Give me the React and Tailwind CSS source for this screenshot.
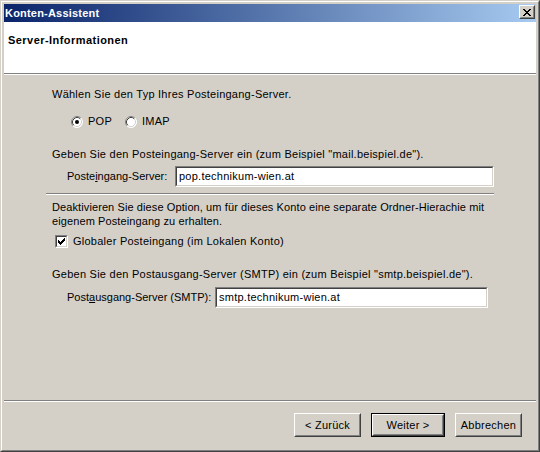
import React from "react";

function CloseButton() {
  return (
    <div className="mt-[1px] mr-[1px] w-[16px] h-[14px] border border-t-white border-l-white border-r-[#404040] border-b-[#404040] bg-[#d4d0c8]">
      <div className="w-full h-full border border-t-[#d4d0c8] border-l-[#d4d0c8] border-r-[#808080] border-b-[#808080] flex items-center justify-center">
        <svg width="8" height="7" viewBox="0 0 8 7" shapeRendering="crispEdges">
          <path d="M0 0h2v1h-2zM1 1h2v1h-2zM2 2h4v1h-4zM3 3h2v1h-2zM2 4h4v1h-4zM1 5h2v1h-2zM0 6h2v1h-2zM6 0h2v1h-2zM5 1h2v1h-2zM5 5h2v1h-2zM6 6h2v1h-2z" fill="#000" />
        </svg>
      </div>
    </div>
  );
}

function Radio({ checked }) {
  return (
    <svg width="12" height="12" viewBox="0 0 12 12" className="shrink-0">
      <circle cx="6" cy="6" r="5.5" fill="#fff" />
      <path d="M2.11 9.89A5.5 5.5 0 0 1 9.89 2.11" stroke="#808080" fill="none" />
      <path d="M9.89 2.11A5.5 5.5 0 0 1 2.11 9.89" stroke="#fff" fill="none" />
      <path d="M2.82 9.18A4.5 4.5 0 0 1 9.18 2.82" stroke="#404040" fill="none" />
      <path d="M9.18 2.82A4.5 4.5 0 0 1 2.82 9.18" stroke="#d4d0c8" fill="none" />
      {checked ? <circle cx="6" cy="6" r="2" fill="#000" /> : null}
    </svg>
  );
}

function Checkbox() {
  return (
    <div className="w-[13px] h-[13px] shrink-0 border border-t-[#808080] border-l-[#808080] border-r-white border-b-white">
      <div className="w-full h-full border border-t-[#404040] border-l-[#404040] border-r-[#d4d0c8] border-b-[#d4d0c8] bg-white flex items-center justify-center">
        <svg width="7" height="7" viewBox="0 0 7 7" shapeRendering="crispEdges">
          <path d="M0 2h1v3h-1zM1 3h1v3h-1zM2 4h1v3h-1zM3 3h1v3h-1zM4 2h1v3h-1zM5 1h1v3h-1zM6 0h1v3h-1z" fill="#000" />
        </svg>
      </div>
    </div>
  );
}

function Field({ value, className }) {
  return (
    <div className={"h-[21px] border border-t-[#808080] border-l-[#808080] border-r-white border-b-white " + className}>
      <div className="h-full border border-t-[#404040] border-l-[#404040] border-r-[#d4d0c8] border-b-[#d4d0c8] bg-white flex items-center pl-[2px]">
        {value}
      </div>
    </div>
  );
}

function Button({ label, width, isDefault }) {
  const inner = (
    <div className="h-full border border-t-white border-l-white border-r-[#404040] border-b-[#404040]">
      <div className="h-full border border-t-[#d4d0c8] border-l-[#d4d0c8] border-r-[#808080] border-b-[#808080] flex items-center justify-center">
        {label}
      </div>
    </div>
  );

  if (isDefault) {
    return (
      <div className={"h-[24px] border border-black " + width}>
        {inner}
      </div>
    );
  }

  return <div className={"h-[24px] " + width}>{inner}</div>;
}

export default function App() {
  return (
    <div className="w-[540px] h-[452px] whitespace-nowrap font-['Liberation_Sans',Arial,sans-serif] text-[11px] leading-[13px] tracking-[0.25px] text-black bg-[#d4d0c8] border border-t-[#d4d0c8] border-l-[#d4d0c8] border-r-[#404040] border-b-[#404040]">
      <div className="h-full border border-t-white border-l-white border-r-[#808080] border-b-[#808080] p-[2px] flex flex-col">
        <div className="h-[18px] shrink-0 flex items-start justify-between bg-[linear-gradient(to_right,#0a246a,#a6caf0)]">
          <span className="pl-[1px] leading-[18px] tracking-[0.2px] font-bold text-white">
            Konten-Assistent
          </span>
          <CloseButton />
        </div>

        <div className="h-[51px] shrink-0 bg-white pl-[4px] pt-[12px] font-bold tracking-[0.45px]">
          Server-Informationen
        </div>
        <div className="h-px shrink-0 bg-[#808080]" />
        <div className="h-px shrink-0 bg-white" />

        <div className="flex-1 ml-[42px] w-[448px] flex flex-col">
          <div className="mt-[13px] pl-[6px]">Wählen Sie den Typ Ihres Posteingang-Server.</div>

          <div className="mt-[14px] ml-[25px] h-[13px] flex items-center">
            <div className="w-[54px] flex items-center gap-[5px]">
              <Radio checked />
              <span>POP</span>
            </div>
            <div className="flex items-center gap-[5px]">
              <Radio />
              <span>IMAP</span>
            </div>
          </div>

          <div className="mt-[20px] pl-[6px]">
            Geben Sie den Posteingang-Server ein (zum Beispiel "mail.beispiel.de").
          </div>

          <div className="mt-[5px] ml-[21px] flex items-center">
            <span className="w-[108px] shrink-0 tracking-normal">
              Poste<span className="underline">i</span>ngang-Server:
            </span>
            <Field value="pop.technikum-wien.at" className="flex-1" />
          </div>

          <div className="mt-[6px] h-px bg-[#808080]" />
          <div className="h-px bg-white" />

          <div className="mt-[5px] pl-[6px] leading-[14px] tracking-[0.1px]">
            <div>Deaktivieren Sie diese Option, um für dieses Konto eine separate Ordner-Hierachie mit</div>
            <div>eigenem Posteingang zu erhalten.</div>
          </div>

          <div className="mt-[7px] ml-[9px] flex items-center gap-[5px]">
            <Checkbox />
            <span>Globaler Posteingang (im Lokalen Konto)</span>
          </div>

          <div className="mt-[20px] pl-[6px]">
            Geben Sie den Postausgang-Server (SMTP) ein (zum Beispiel "smtp.beispiel.de").
          </div>

          <div className="mt-[6px] ml-[21px] mr-[6px] flex items-center">
            <span className="w-[148px] shrink-0 tracking-normal">
              Post<span className="underline">a</span>usgang-Server (SMTP):
            </span>
            <Field value="smtp.technikum-wien.at" className="flex-1" />
          </div>
        </div>

        <div className="h-px shrink-0 bg-[#808080]" />
        <div className="h-px shrink-0 bg-white" />

        <div className="h-[46px] shrink-0 pt-[11px] pr-[14px] flex justify-end gap-[10px]">
          <Button label="< Zurück" width="w-[67px]" />
          <Button label="Weiter >" width="w-[74px]" isDefault />
          <Button label="Abbrechen" width="w-[67px]" />
        </div>
      </div>
    </div>
  );
}
